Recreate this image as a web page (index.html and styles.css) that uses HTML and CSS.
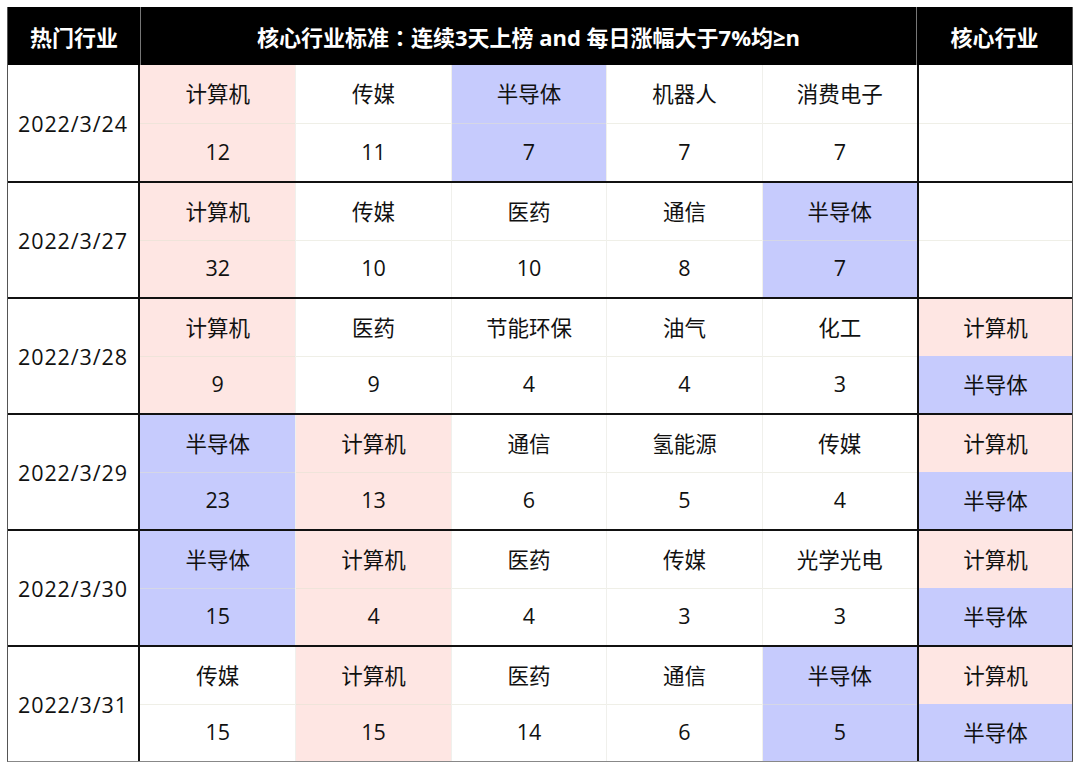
FILE: index.html
```html
<!DOCTYPE html>
<html lang="zh-CN">
<head>
<meta charset="utf-8">
<title>核心行业</title>
<link rel="stylesheet" href="styles.css">
</head>
<body>
<div class="table">
  <div class="head">
    <div class="hcell first">热门行业</div>
    <div class="hcell mid">核心行业标准<span class="colon">：</span>连续3天上榜 and 每日涨幅大于7%均≥n</div>
    <div class="hcell last">核心行业</div>
  </div>

  <div class="row">
    <div class="date">2022/3/24</div>
    <div class="col pink"><div class="sub">计算机</div><div class="sub lo">12</div></div>
    <div class="col"><div class="sub">传媒</div><div class="sub lo">11</div></div>
    <div class="col blue"><div class="sub">半导体</div><div class="sub lo">7</div></div>
    <div class="col"><div class="sub">机器人</div><div class="sub lo">7</div></div>
    <div class="col"><div class="sub">消费电子</div><div class="sub lo">7</div></div>
    <div class="core"><div class="sub"></div><div class="sub lo"></div></div>
  </div>

  <div class="row">
    <div class="date">2022/3/27</div>
    <div class="col pink"><div class="sub">计算机</div><div class="sub lo">32</div></div>
    <div class="col"><div class="sub">传媒</div><div class="sub lo">10</div></div>
    <div class="col"><div class="sub">医药</div><div class="sub lo">10</div></div>
    <div class="col"><div class="sub">通信</div><div class="sub lo">8</div></div>
    <div class="col blue"><div class="sub">半导体</div><div class="sub lo">7</div></div>
    <div class="core"><div class="sub"></div><div class="sub lo"></div></div>
  </div>

  <div class="row">
    <div class="date">2022/3/28</div>
    <div class="col pink"><div class="sub">计算机</div><div class="sub lo">9</div></div>
    <div class="col"><div class="sub">医药</div><div class="sub lo">9</div></div>
    <div class="col"><div class="sub">节能环保</div><div class="sub lo">4</div></div>
    <div class="col"><div class="sub">油气</div><div class="sub lo">4</div></div>
    <div class="col"><div class="sub">化工</div><div class="sub lo">3</div></div>
    <div class="core"><div class="sub pink">计算机</div><div class="sub blue">半导体</div></div>
  </div>

  <div class="row">
    <div class="date">2022/3/29</div>
    <div class="col blue"><div class="sub">半导体</div><div class="sub lo">23</div></div>
    <div class="col pink"><div class="sub">计算机</div><div class="sub lo">13</div></div>
    <div class="col"><div class="sub">通信</div><div class="sub lo">6</div></div>
    <div class="col"><div class="sub">氢能源</div><div class="sub lo">5</div></div>
    <div class="col"><div class="sub">传媒</div><div class="sub lo">4</div></div>
    <div class="core"><div class="sub pink">计算机</div><div class="sub blue">半导体</div></div>
  </div>

  <div class="row">
    <div class="date">2022/3/30</div>
    <div class="col blue"><div class="sub">半导体</div><div class="sub lo">15</div></div>
    <div class="col pink"><div class="sub">计算机</div><div class="sub lo">4</div></div>
    <div class="col"><div class="sub">医药</div><div class="sub lo">4</div></div>
    <div class="col"><div class="sub">传媒</div><div class="sub lo">3</div></div>
    <div class="col"><div class="sub">光学光电</div><div class="sub lo">3</div></div>
    <div class="core"><div class="sub pink">计算机</div><div class="sub blue">半导体</div></div>
  </div>

  <div class="row">
    <div class="date">2022/3/31</div>
    <div class="col"><div class="sub">传媒</div><div class="sub lo">15</div></div>
    <div class="col pink"><div class="sub">计算机</div><div class="sub lo">15</div></div>
    <div class="col"><div class="sub">医药</div><div class="sub lo">14</div></div>
    <div class="col"><div class="sub">通信</div><div class="sub lo">6</div></div>
    <div class="col blue"><div class="sub">半导体</div><div class="sub lo">5</div></div>
    <div class="core"><div class="sub pink">计算机</div><div class="sub blue">半导体</div></div>
  </div>
</div>
</body>
</html>
```

FILE: styles.css
```css
html, body {
  margin: 0;
  padding: 0;
  background: #ffffff;
}

body {
  padding: 7px;
  font-family: "Open Sans", "Noto Sans CJK SC", sans-serif;
  color: #111111;
}

.table {
  width: 1066px;
  box-sizing: border-box;
  border-left: 1px solid #555555;
  border-right: 1px solid #555555;
  border-bottom: 1px solid #888888;
}

.head,
.row {
  display: grid;
  grid-template-columns: 132px repeat(5, 1fr) 155px;
}

.head {
  height: 58px;
  background: #000000;
  color: #ffffff;
  font-weight: 700;
  font-size: 22px;
}

.hcell {
  display: flex;
  align-items: center;
  justify-content: center;
  white-space: pre;
}

.hcell.mid {
  grid-column: span 5;
  border-left: 1px solid #777777;
  border-right: 1px solid #777777;
}

.colon {
  display: inline-block;
  width: 22px;
  text-align: center;
  font-family: "Noto Sans CJK TC", sans-serif;
}

.row {
  height: 116px;
  box-sizing: border-box;
  border-top: 2px solid #111111;
  font-size: 21.5px;
}

.head + .row {
  border-top: none;
}

.date {
  display: flex;
  align-items: center;
  justify-content: center;
  border-right: 2px solid #111111;
  letter-spacing: 0.9px;
}

.col,
.core {
  display: flex;
  flex-direction: column;
}

.col + .col {
  border-left: 1px solid #f0f0ec;
}

.core {
  border-left: 2px solid #111111;
}

.sub {
  flex: 1;
  display: flex;
  align-items: center;
  justify-content: center;
  padding-bottom: 2px;
}

.sub.lo {
  border-top: 1px solid rgba(225, 225, 212, 0.55);
}

.pink {
  background: #fee6e3;
}

.blue {
  background: #c6cbfd;
}
```
